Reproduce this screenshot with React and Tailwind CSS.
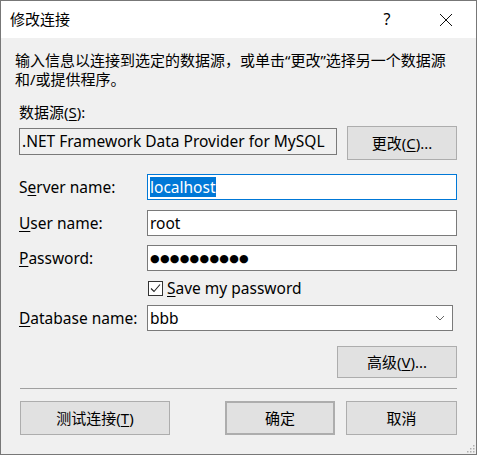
import React from "react";

const F = { fontFamily: '"Noto Sans", "Noto Sans CJK SC", sans-serif' };

function U({ children }) {
  return <span className="underline underline-offset-[2px] decoration-[1px]">{children}</span>;
}

function Btn({ className = "", children }) {
  return (
    <div
      className={
        "flex items-center justify-center bg-[#e1e1e1] border border-[#adadad] text-[15px] text-black " +
        className
      }
    >
      {children}
    </div>
  );
}

function Row({ label, children, className = "" }) {
  return (
    <div className={"flex items-center " + className}>
      <div className="w-[128px] text-[15.5px] leading-[19px] text-black">{label}</div>
      {children}
    </div>
  );
}

export default function App() {
  return (
    <div
      style={F}
      className="relative w-[477px] h-[455px] border border-[#777777] bg-[#f0f0f0] flex flex-col overflow-hidden"
    >
      {/* Title bar */}
      <div className="h-[37px] bg-white flex items-center shrink-0">
        <div className="pl-[9px] text-[15px] text-black leading-[19px]">修改连接</div>
        <div className="ml-auto flex items-center">
          <div className="w-[24px] text-center text-[16px] text-black leading-[19px] mr-[40px]">?</div>
          <svg width="14" height="14" viewBox="0 0 14 14" className="mr-[23px]">
            <path d="M1 1 L13 13 M13 1 L1 13" stroke="#111" strokeWidth="1" fill="none" />
          </svg>
        </div>
      </div>

      {/* Body */}
      <div className="flex flex-col pl-[18px] pr-[19px] text-black">
        <div className="mt-[13px] ml-[-4px] text-[15px] leading-[19px]">
          输入信息以连接到选定的数据源，或单击“更改”选择另一个数据源
          <br />
          和/或提供程序。
        </div>

        <div className="mt-[14px] text-[15px] leading-[19px]">
          数据源(<U>S</U>):
        </div>

        <div className="mt-[4px] flex items-start">
          <div className="mt-[2px] w-[318px] h-[27px] border border-[#7a7a7a] bg-[#f0f0f0] flex items-center pl-[2px] text-[15.5px] leading-[19px] whitespace-nowrap overflow-hidden">
            .NET Framework Data Provider for MySQL
          </div>
          <Btn className="ml-[10px] w-[110px] h-[34px]">
            更改(<U>C</U>)...
          </Btn>
        </div>

        <Row className="mt-[14px]" label={<>S<U>e</U>rver name:</>}>
          <div className="w-[310px] h-[26px] border border-[#0078d7] bg-white flex items-center pl-[2px]">
            <span className="bg-[#0078d7] text-white text-[15.5px] leading-[20px]">localhost</span>
          </div>
        </Row>

        <Row className="mt-[10px]" label={<><U>U</U>ser name:</>}>
          <div className="w-[310px] h-[26px] border border-[#7a7a7a] bg-white flex items-center pl-[2px] text-[15.5px] leading-[19px]">
            root
          </div>
        </Row>

        <Row className="mt-[9px]" label={<><U>P</U>assword:</>}>
          <div className="w-[310px] h-[26px] border border-[#7a7a7a] bg-white flex items-center pl-[2px] text-[15px] leading-[19px]">
            <span style={{ fontFamily: '"DejaVu Sans", sans-serif' }} className="text-[11px] tracking-[0.3px]">
              ●●●●●●●●●●
            </span>
          </div>
        </Row>

        <div className="mt-[8px] flex items-center pl-[129px]">
          <div className="w-[15px] h-[15px] border border-[#333333] bg-white flex items-center justify-center">
            <svg width="13" height="13" viewBox="0 0 13 13">
              <path d="M2 6.5 L5 9.5 L11 2.5" stroke="#222" strokeWidth="1.1" fill="none" />
            </svg>
          </div>
          <div className="ml-[4px] text-[15.5px] leading-[19px]">
            <U>S</U>ave my password
          </div>
        </div>

        <Row className="mt-[7px]" label={<><U>D</U>atabase name:</>}>
          <div className="w-[306px] h-[26px] border border-[#7a7a7a] bg-white flex items-center pl-[2px] text-[15.5px] leading-[19px]">
            bbb
            <svg width="10" height="6" viewBox="0 0 10 6" className="ml-auto mr-[7px]">
              <path d="M1 1 L5 5 L9 1" stroke="#666" strokeWidth="1" fill="none" />
            </svg>
          </div>
        </Row>

        <div className="mt-[15px] flex justify-end">
          <Btn className="w-[120px] h-[32px]">
            高级(<U>V</U>)...
          </Btn>
        </div>

        <div className="mt-[10px] ml-[1px] h-px bg-[#a0a0a0]" />

        <div className="mt-[12px] flex items-center">
          <Btn className="ml-[1px] w-[150px] h-[34px]">
            测试连接(<U>T</U>)
          </Btn>
          <Btn className="ml-[55px] w-[110px] h-[34px] border-2 border-[#0078d7]">确定</Btn>
          <Btn className="ml-[11px] w-[111px] h-[34px]">取消</Btn>
        </div>
      </div>

      <svg width="8" height="8" viewBox="0 0 8 8" className="absolute right-[1px] bottom-[1px]">
        <rect x="6" y="0" width="1.5" height="1.5" fill="#b0b0b0" />
        <rect x="3" y="3" width="1.5" height="1.5" fill="#b0b0b0" />
        <rect x="6" y="3" width="1.5" height="1.5" fill="#b0b0b0" />
        <rect x="0" y="6" width="1.5" height="1.5" fill="#b0b0b0" />
        <rect x="3" y="6" width="1.5" height="1.5" fill="#b0b0b0" />
        <rect x="6" y="6" width="1.5" height="1.5" fill="#b0b0b0" />
      </svg>
    </div>
  );
}
